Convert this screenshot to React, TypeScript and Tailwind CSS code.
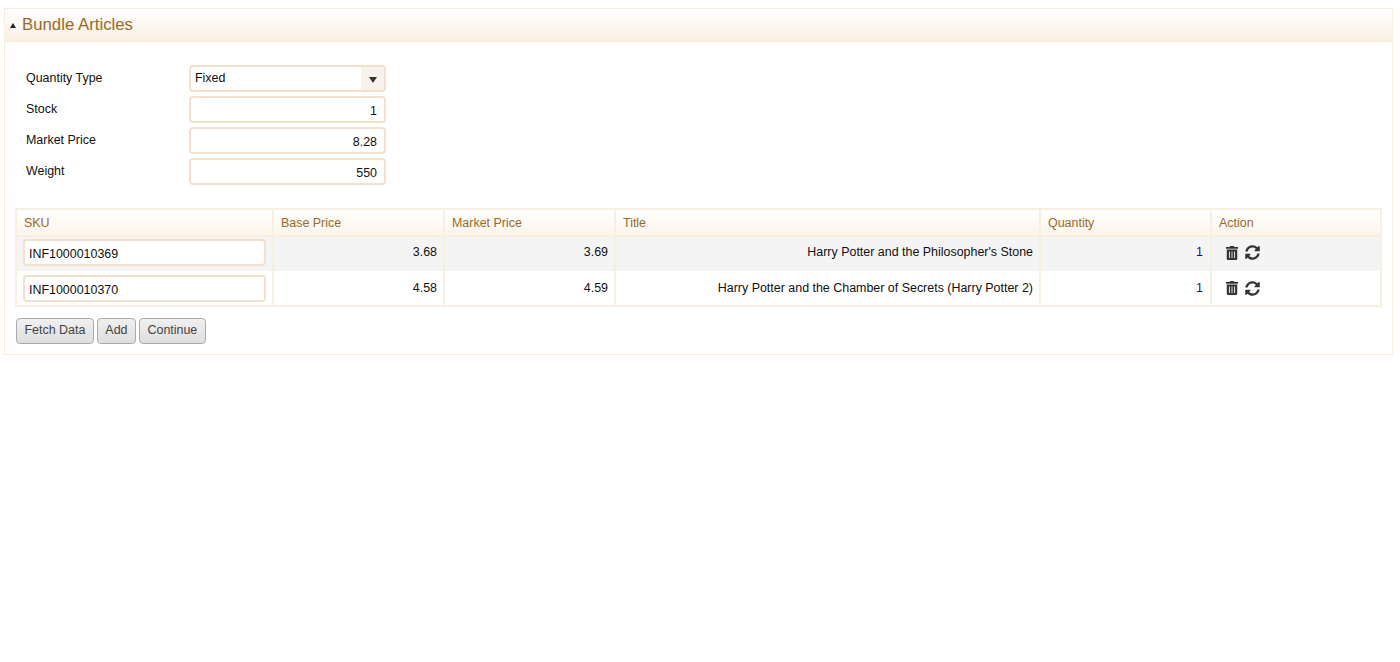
import { FaTrashAlt, FaSyncAlt } from "react-icons/fa";

const fields = [
  { label: "Stock", value: "1" },
  { label: "Market Price", value: "8.28" },
  { label: "Weight", value: "550" },
];

const rows = [
  { sku: "INF1000010369", base: "3.68", market: "3.69", title: "Harry Potter and the Philosopher's Stone", qty: "1", bg: "bg-[#f4f4f4]", cell: "pb-[3px]" },
  { sku: "INF1000010370", base: "4.58", market: "4.59", title: "Harry Potter and the Chamber of Secrets (Harry Potter 2)", qty: "1", bg: "bg-white", cell: "border-b-2" },
];

const heads = ["SKU", "Base Price", "Market Price", "Title", "Quantity", "Action"];

export default function App() {
  return (
    <div className="min-h-[662px] bg-white pt-2 px-1 font-['Liberation_Sans',Arial,sans-serif] text-[12.45px] text-[#111]">
      <div className="w-[1389px] border border-[#f9eedd]">
        {/* header */}
        <div className="h-[33px] flex items-center gap-[6px] pl-[5px] border-b border-[#f7e8d2] bg-gradient-to-b from-white to-[#f9f0e2]">
          <span className="w-0 h-0 border-x-[3px] border-x-transparent border-b-[5px] border-b-[#222]" />
          <span className="text-[16.8px] text-[#9b6a28]">Bundle Articles</span>
        </div>

        <div className="pt-[23px] pb-[10px] px-[11px]">
          {/* form */}
          <div className="flex flex-col gap-[5px] pl-[10px]">
            <div className="flex h-[26px]">
              <div className="w-[163px] pt-[4px]">Quantity Type</div>
              <div className="w-[197px] h-[27px] flex justify-between border-2 border-[#f3e2c9] rounded bg-white">
                <span className="pl-[4px] pt-[2px]">Fixed</span>
                <span className="w-[23px] flex items-center justify-center bg-[#f7f3ec]">
                  <span className="w-0 h-0 mt-[2px] border-x-[4px] border-x-transparent border-t-[6px] border-t-[#333]" />
                </span>
              </div>
            </div>
            {fields.map((f) => (
              <div key={f.label} className="flex h-[26px]">
                <div className="w-[163px] pt-[4px]">{f.label}</div>
                <div className="w-[197px] h-[27px] border-2 border-[#f3e2c9] rounded bg-white text-right pr-[7px] pt-[4px]">
                  {f.value}
                </div>
              </div>
            ))}
          </div>

          {/* table */}
          <table className="mt-[24px] -ml-px w-[1365px] table-fixed border-collapse">
            <colgroup>
              <col className="w-[257px]" />
              <col className="w-[171px]" />
              <col className="w-[171px]" />
              <col className="w-[425px]" />
              <col className="w-[171px]" />
              <col className="w-[170px]" />
            </colgroup>
            <thead>
              <tr className="h-[27px] bg-gradient-to-b from-white to-[#fbf4e9]">
                {heads.map((h) => (
                  <th key={h} className="border-2 border-[#f8efe0] px-[7px] pt-[2px] text-left font-normal text-[#9b6a28]">
                    {h}
                  </th>
                ))}
              </tr>
            </thead>
            <tbody>
              {rows.map((r) => (
                <tr key={r.sku} className={`h-[35px] ${r.bg}`}>
                  <td className={`border-x-2 border-[#f8efe0] pl-[6px] pr-[6px] ${r.cell}`}>
                    <div className="w-[243px] h-[27px] border-2 border-[#f3e2c9] rounded bg-white pl-[4px] pt-[4px]">
                      {r.sku}
                    </div>
                  </td>
                  <td className={`border-x-2 border-[#f8efe0] pl-[7px] pr-[6px] text-right ${r.cell}`}>{r.base}</td>
                  <td className={`border-x-2 border-[#f8efe0] pl-[7px] pr-[6px] text-right ${r.cell}`}>{r.market}</td>
                  <td className={`border-x-2 border-[#f8efe0] pl-[7px] pr-[6px] text-right ${r.cell}`}>{r.title}</td>
                  <td className={`border-x-2 border-[#f8efe0] pl-[7px] pr-[7px] text-right text-[#2a0a8a] ${r.cell}`}>{r.qty}</td>
                  <td className={`border-x-2 border-[#f8efe0] pl-[13px] ${r.cell}`}>
                    <div className="flex items-center gap-[6px]">
                      <FaTrashAlt size={14} className="text-[#333]" />
                      <FaSyncAlt size={15} className="text-[#333]" />
                    </div>
                  </td>
                </tr>
              ))}
            </tbody>
          </table>

          {/* buttons */}
          <div className="mt-[11px] flex gap-[3px]">
            {["Fetch Data", "Add", "Continue"].map((b) => (
              <button
                key={b}
                className="h-[26px] px-[7.5px] pb-[2px] border border-[#aaa] rounded bg-gradient-to-b from-[#f0f0f0] to-[#dedede] text-[#444]"
              >
                {b}
              </button>
            ))}
          </div>
        </div>
      </div>
    </div>
  );
}
